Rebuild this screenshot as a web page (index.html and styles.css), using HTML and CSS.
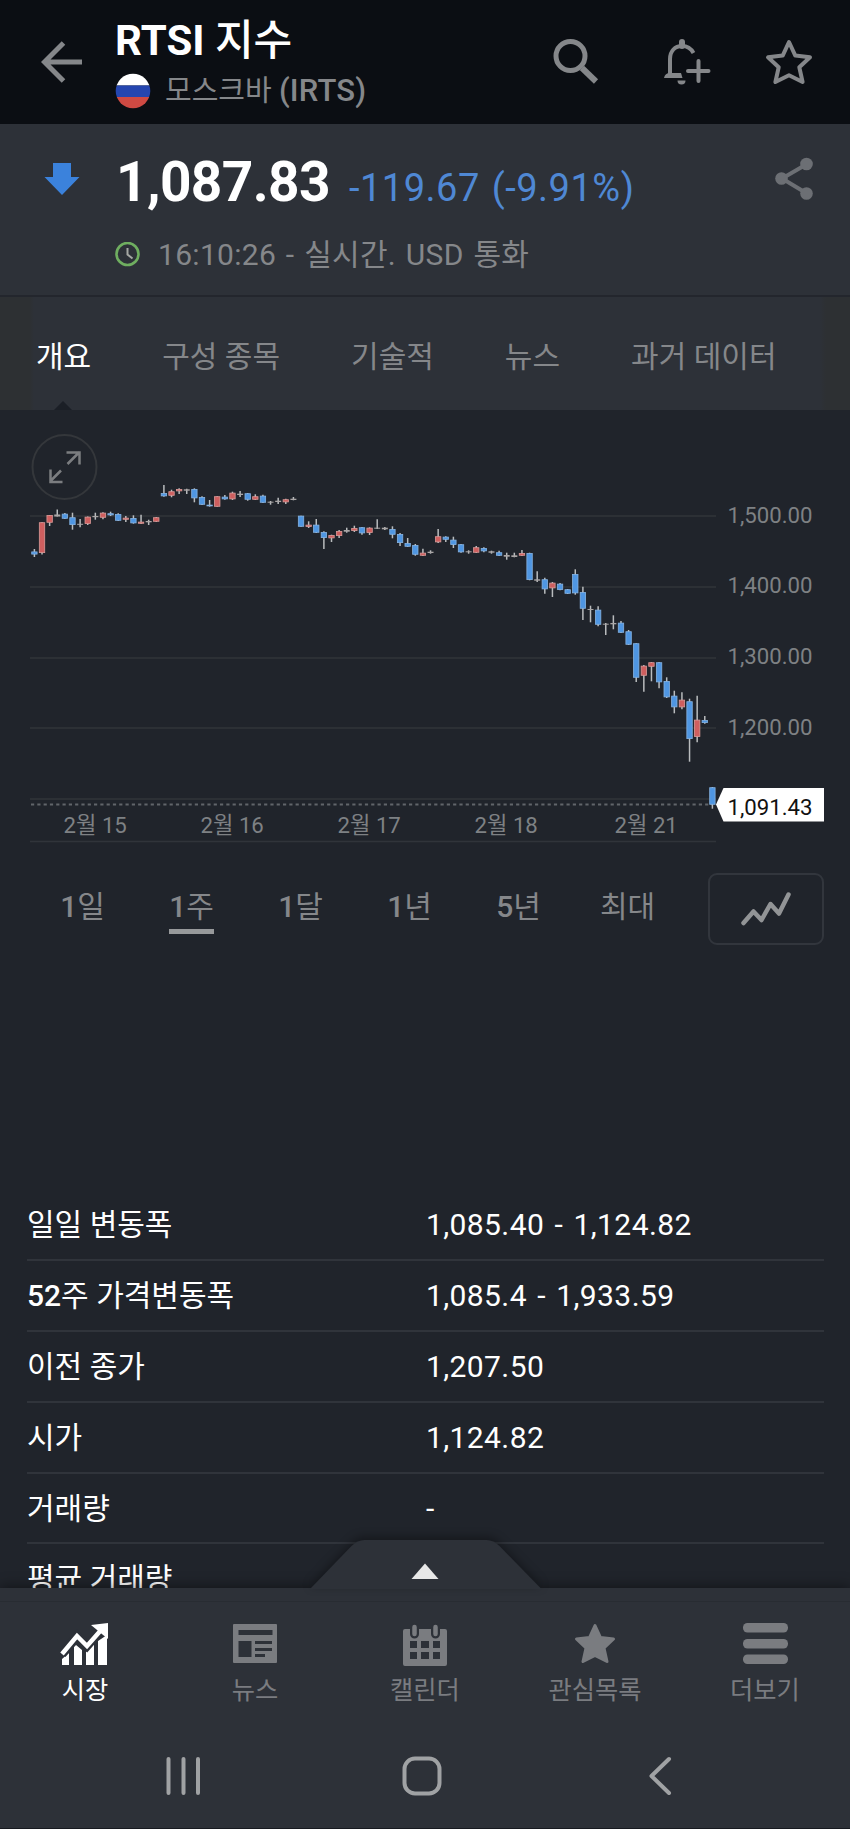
FILE: index.html
```
<!DOCTYPE html>
<html lang="ko">
<head>
    <meta charset="UTF-8">
    <meta name="viewport" content="width=device-width, initial-scale=1.0">
    <title>RTSI 지수</title>
    <link rel="stylesheet" href="styles.css">
</head>
<body>
    <header class="topbar">
        <svg class="back" width="42" height="42" viewBox="0 0 42 42"><path d="M41 21H3M22.500 2 3.500 21l19 19" /></svg>
        <div class="title">
            <h1>RTSI <span>지수</span></h1>
            <div class="exchange">
                <svg width="36" height="36" viewBox="0 0 36 36">
                    <clipPath id="flag"><circle cx="18" cy="18" r="17.3" /></clipPath>
                    <g clip-path="url(#flag)">
                        <rect width="36" height="12.5" fill="#fff" />
                        <rect y="12.5" width="36" height="11.5" fill="#2546b0" />
                        <rect y="24" width="36" height="12" fill="#cf4a43" />
                    </g>
                </svg>
                <span>모스크바 <b>(IRTS)</b></span>
            </div>
        </div>
        <div class="actions">
            <svg width="46" height="46" viewBox="0 0 46 46" fill="none" stroke="#85878a">
                <circle cx="17.5" cy="17" r="14.5" stroke-width="5" />
                <path d="M29 29 43 42.500" stroke-width="6" />
            </svg>
            <svg width="48" height="48" viewBox="0 0 48 48" fill="none" stroke="#85878a" stroke-width="4">
                <path d="M7 38V21c0-8 5-13 12-13 5 0 9 2.500 11.500 7" />
                <path d="M1 40q1-5 6-5h11l1.500 5z" fill="#85878a" stroke="none" />
                <path d="M19 8V4" stroke-width="6" stroke-linecap="round" />
                <path d="M35.500 23v20M25 33h20.500" stroke-linecap="round" />
                <path d="M14.500 42.500h8a4 4 0 0 1-8 0z" fill="#85878a" stroke="none" />
            </svg>
            <svg width="48" height="48" viewBox="0 0 48 48" fill="none" stroke="#85878a" stroke-width="4" stroke-linejoin="round">
                <path d="M24 4l6.300 13.600L45 19.300 34.300 29.200 37.600 44 24 37.300 10.400 44l3.300-14.800L3 19.300l14.700-1.700z" />
            </svg>
        </div>
    </header>

    <section class="quote">
        <svg class="down" width="36" height="34" viewBox="0 0 36 34"><path d="M9 1h18v14h8.500L18 33 .500 15H9z" fill="#3b82dc" /></svg>
        <div class="quote-info">
            <div class="price-line">
                <span class="price">1,087.83</span>
                <span class="change">-119.67 (-9.91%)</span>
            </div>
            <div class="time-line">
                <svg width="26" height="26" viewBox="0 0 26 26" fill="none">
                    <circle cx="12.500" cy="12" r="11" stroke="#6fae60" stroke-width="2.600" />
                    <path d="M12.500 6v6.500l5 4" stroke="#a5a8a4" stroke-width="2" />
                </svg>
                <span>16:10:26 - 실시간. USD 통화</span>
            </div>
        </div>
        <svg class="share" width="40" height="44" viewBox="0 0 40 44" fill="#6c6f74">
            <path d="M33 7 8 21.500 33 36.500" fill="none" stroke="#6c6f74" stroke-width="4" />
            <circle cx="32.500" cy="7" r="6.300" /><circle cx="7.500" cy="21.500" r="6.300" /><circle cx="32.500" cy="36.500" r="6.300" />
        </svg>
    </section>

    <nav class="tabs">
        <a class="active">개요</a>
        <a>구성 종목</a>
        <a>기술적</a>
        <a>뉴스</a>
        <a>과거 데이터</a>
    </nav>

    <main>
        <svg id="chart" width="850" height="440" viewBox="0 410 850 440">
            <g class="grid">
                <path d="M30 516H716M30 587H716M30 658H716M30 728H716M30 799H716M30 841.500H716" />
            </g>
            <path class="last-line" d="M31 804.500H712" />
            <g id="candles"></g>
            <g class="expand">
                <circle cx="64.500" cy="467" r="32" />
                <path d="M67.500 464 79.500 452M66.500 452.500h13v12M61 470.500 50 481.500M50.500 469.500v12.500h12" />
            </g>
            <g class="axis">
                <text x="727.500" y="523">1,500.00</text>
                <text x="727.500" y="593">1,400.00</text>
                <text x="727.500" y="664">1,300.00</text>
                <text x="727.500" y="735">1,200.00</text>
                <text x="63.500" y="833">2월 15</text>
                <text x="200.500" y="833">2월 16</text>
                <text x="337.500" y="833">2월 17</text>
                <text x="474.500" y="833">2월 18</text>
                <text x="614.500" y="833">2월 21</text>
            </g>
            <path d="M716 804.500 723.500 788H824v33.500H723.500z" fill="#fff" />
            <text class="last-price" x="727.500" y="814.500">1,091.43</text>
        </svg>

        <div class="periods">
            <div class="period-list">
                <span><b>1</b>일</span>
                <span class="selected"><b>1</b>주</span>
                <span><b>1</b>달</span>
                <span><b>1</b>년</span>
                <span><b>5</b>년</span>
                <span>최대</span>
            </div>
            <button class="chart-type" type="button">
                <svg width="50" height="34" viewBox="0 0 50 34"><path d="M2.500 31 12.500 19.500 20.500 28 29.500 12 38 21.500 47.500 2.500" /></svg>
            </button>
        </div>

        <div class="stats">
            <div class="row"><label>일일 변동폭</label><span>1,085.40 - 1,124.82</span></div>
            <div class="row"><label><b>52</b>주 가격변동폭</label><span>1,085.4 - 1,933.59</span></div>
            <div class="row"><label>이전 종가</label><span>1,207.50</span></div>
            <div class="row"><label>시가</label><span>1,124.82</span></div>
            <div class="row"><label>거래량</label><span>-</span></div>
            <div class="row"><label>평균 거래량</label><span></span></div>
        </div>
    </main>

    <footer>
        <svg class="handle" width="232" height="49" viewBox="0 0 232 49">
            <path d="M0 49 41.500 6q6-6 13-6h122q7 0 13 6l42 43z" fill="#2d3138" />
            <path d="M101.500 39 115 23.500l13.500 15.500z" fill="#e8e8e8" />
        </svg>
        <div class="menu">
            <a class="active">
                <svg width="50" height="44" viewBox="0 0 50 44" fill="currentColor">
                    <path d="M2 43v-6l7-6v12zM14 43V25l2-2 6 5v15zM26 43V30l8-9v22zM38 43V19l9-6v30z" />
                    <path d="M2 32 17 14l10 10L42 7" fill="none" stroke="#2d3138" stroke-width="9" />
                    <path d="M2 32 17 14l10 10L42 7" fill="none" stroke="currentColor" stroke-width="4.500" />
                    <path d="M31 3 48 1v16z" />
                </svg>
                <span>시장</span>
            </a>
            <a>
                <svg width="50" height="44" viewBox="0 0 50 44" fill="currentColor">
                    <path fill-rule="evenodd" d="M4 2h42q1 0 1 1v37q0 1-1 1H4q-1 0-1-1V3q0-1 1-1zM8.500 8v5h34V8zM8.500 19v16h13V19zM25 19v3h17v-3zM25 26v3h17v-3zM25 32v3h10v-3z" />
                </svg>
                <span>뉴스</span>
            </a>
            <a>
                <svg width="50" height="44" viewBox="0 0 50 44" fill="currentColor">
                    <path fill-rule="evenodd" d="M3 9q0-2 2-2h40q2 0 2 2v33q0 2-2 2H5q-2 0-2-2zM10 19v7h7v-7zM21 19v7h8v-7zM33 19v7h7v-7zM10 30v7h7v-7zM21 30v7h8v-7zM33 30v7h7v-7z" />
                    <path d="M14.500 6v6M35.500 6v6" stroke="#2d3138" stroke-width="9" stroke-linecap="round" />
                    <path d="M14.500 5v7M35.500 5v7" stroke="currentColor" stroke-width="4.500" stroke-linecap="round" />
                </svg>
                <span>캘린더</span>
            </a>
            <a>
                <svg width="50" height="44" viewBox="0 0 50 44" fill="currentColor">
                    <path d="M25 3.500 30.500 15.500 43.500 17 34 26 37 39.500 25 33.500 13 39.500 16 26 6.500 17 19.500 15.500z" stroke="currentColor" stroke-width="3" stroke-linejoin="round" />
                </svg>
                <span>관심목록</span>
            </a>
            <a>
                <svg width="50" height="44" viewBox="0 0 50 44" fill="currentColor">
                    <rect x="3" y="1" width="45" height="9.500" rx="4.500" />
                    <rect x="3" y="17" width="45" height="9.500" rx="4.500" />
                    <rect x="3" y="32.500" width="45" height="9.500" rx="4.500" />
                </svg>
                <span>더보기</span>
            </a>
        </div>
        <div class="system-nav">
            <svg width="40" height="40" viewBox="0 0 40 40"><path d="M4.500 3v34M19.500 3v34M34 3v34" /></svg>
            <svg width="40" height="40" viewBox="0 0 40 40"><rect x="2.500" y="2.500" width="35" height="35" rx="10.500" /></svg>
            <svg width="40" height="40" viewBox="0 0 40 40"><path d="M29 3 11.500 20 29 37" /></svg>
        </div>
    </footer>
    <script src="chart.js"></script>
</body>
</html>
```
FILE: styles.css
```
* {
    box-sizing: border-box;
}
body {
    margin: 0;
    width: 850px;
    height: 1829px;
    display: flex;
    flex-direction: column;
    overflow: hidden;
    background-color: #20242b;
    color: #fff;
    font-family: Roboto, "Noto Sans CJK KR", sans-serif;
}
b {
    font-weight: 500;
}
svg {
    display: block;
    flex-shrink: 0;
}
.topbar {
    height: 124px;
    flex-shrink: 0;
    display: flex;
    padding: 0 37px 0 41px;
    background-color: #0b0e13;
}
.back {
    margin-top: 41px;
    fill: none;
    stroke: #85878a;
    stroke-width: 5;
}
.title {
    margin-left: 32px;
    padding-top: 15px;
}
h1 {
    margin: 0;
    height: 56px;
    line-height: 51px;
    font-size: 42px;
    font-weight: 700;
}
h1 span {
    font-weight: 500;
}
.exchange {
    display: flex;
    align-items: center;
    height: 40px;
    font-size: 29px;
    color: #85878a;
}
.exchange span {
    margin-left: 14px;
    line-height: 36px;
}
.exchange b {
    font-size: 31px;
    letter-spacing: 0.2px;
}
.actions {
    display: flex;
    margin-left: auto;
    padding-top: 38px;
    gap: 54px;
}
.actions svg:first-child {
    margin: 1px 10px 0 0;
}
.quote {
    height: 173px;
    flex-shrink: 0;
    display: flex;
    padding: 0 36px 0 44px;
    background-color: #2d3138;
    border-bottom: 2px solid #23262d;
}
.down {
    margin-top: 38px;
}
.quote-info {
    margin-left: 35px;
}
.price-line {
    display: flex;
    align-items: baseline;
    height: 106px;
    padding-top: 25px;
    line-height: 66px;
}
.price {
    width: 234px;
    padding-left: 1px;
    font-size: 55px;
    font-weight: 700;
    letter-spacing: -0.600px;
}
.change {
    font-size: 38px;
    letter-spacing: 0.500px;
    word-spacing: 2px;
    color: #4f88d4;
}
.time-line {
    display: flex;
    align-items: center;
    font-size: 30px;
    line-height: 50px;
    letter-spacing: 0.300px;
    word-spacing: 2px;
    color: #85878a;
}
.time-line span {
    margin-left: 17px;
}
.share {
    margin: 33px 0 0 auto;
}
.tabs {
    height: 113px;
    flex-shrink: 0;
    display: flex;
    gap: 71px;
    padding: 0 36px;
    line-height: 120px;
    font-size: 30px;
    color: #85878a;
    background: linear-gradient(90deg, #2d3033 30px, #2d3138 34px, #2d3138 820px, #2d3033 826px);
}
.tabs .active {
    position: relative;
    color: #fff;
}
.tabs .active::after {
    content: "";
    position: absolute;
    left: 18px;
    bottom: 0;
    border: 9px solid transparent;
    border-top: 0;
    border-bottom-color: #1b1f26;
}
main {
    height: 1178px;
    flex-shrink: 0;
    overflow: hidden;
}
.grid path {
    fill: none;
    stroke: #30343a;
    stroke-width: 1.500;
}
.last-line {
    stroke: #61656a;
    stroke-width: 2;
    stroke-dasharray: 3.200 3.100;
}
.expand {
    fill: none;
    stroke: #7b7d80;
    stroke-width: 2.500;
}
.expand circle {
    stroke: #34373b;
    stroke-width: 2;
}
.axis {
    fill: #7e8184;
    font-size: 22.200px;
}
.last-price {
    fill: #111;
    font-size: 22.200px;
}
.periods {
    display: flex;
    align-items: center;
    justify-content: space-between;
    height: 118px;
    padding: 0 26px 0 28px;
}
.period-list {
    display: grid;
    grid-template-columns: repeat(6, 109px);
    justify-items: center;
    padding-top: 1px;
    font-size: 30px;
    line-height: 44px;
    color: #85878a;
}
.period-list span {
    height: 49px;
}
.period-list .selected {
    border-bottom: 5px solid #97999b;
}
.chart-type {
    width: 116px;
    height: 72px;
    display: flex;
    align-items: center;
    justify-content: center;
    padding: 0;
    border: 2px solid #32363d;
    border-radius: 9px;
    background: none;
}
.chart-type path {
    fill: none;
    stroke: #929496;
    stroke-width: 4.500;
    stroke-linecap: round;
    stroke-linejoin: round;
}
.stats {
    margin: 222px 26px 0 27px;
}
.row {
    height: 70.900px;
    display: grid;
    grid-template-columns: 399px 1fr;
    border-bottom: 2px solid #30343b;
    font-size: 30px;
    line-height: 70px;
}
.row span {
    letter-spacing: 0.400px;
    word-spacing: 2.500px;
}
footer {
    position: relative;
    flex: 1;
    background-color: #2d3138;
    border-bottom: 1px solid #171a20;
    box-shadow: 0 -2px 12px rgba(0, 0, 0, 0.4);
}
.handle {
    position: absolute;
    left: 310px;
    top: -48px;
    filter: drop-shadow(0 -3px 5px rgba(0, 0, 0, 0.35));
}
.menu {
    display: grid;
    grid-template-columns: repeat(5, 1fr);
    height: 142px;
    margin-top: 13px;
    border-top: 1px solid #282c32;
    padding-top: 20px;
    font-size: 25.300px;
    color: #7a7c80;
}
.menu a {
    display: flex;
    flex-direction: column;
    align-items: center;
    line-height: 49px;
}
.menu .active {
    color: #fff;
}
.system-nav {
    display: flex;
    padding: 13px 0 0 164px;
    gap: 198px;
}
.system-nav svg {
    fill: none;
    stroke: #a0a2a4;
    stroke-width: 4;
    stroke-linecap: round;
    stroke-linejoin: round;
}
```
FILE: chart.js
```
// high, body top, body bottom, low, colour (b = down, r = up, n = flat)
const candles = [
    [549, 551.5, 554.5, 557, 'b'], [522.3, 522.3, 553, 554.5, 'r'], [515, 515, 522.7, 526, 'r'],
    [509.5, 514.5, 516.5, 516.5, 'n'], [513, 513.7, 518.7, 519, 'b'], [512.7, 517.3, 525, 529.7, 'b'],
    [519, 523.8, 524.8, 527.3, 'n'], [516.5, 516.7, 524, 525, 'r'], [512.7, 516, 517.2, 519.7, 'n'],
    [512.3, 512.7, 517.7, 519.3, 'r'], [511.7, 513.3, 515.3, 516, 'b'], [513.3, 514, 520.7, 521, 'b'],
    [516, 517.7, 519.7, 522, 'r'], [515.3, 518, 523.3, 523.7, 'b'], [514.7, 521.7, 523.7, 524, 'r'],
    [519.7, 521, 522.3, 525, 'n'], [517, 517.3, 521.7, 522, 'r'],
    [485, 493, 496.3, 496.7, 'b'], [489.7, 491.3, 495.7, 497.3, 'r'], [488.3, 489, 491.3, 494, 'r'],
    [488.7, 489.3, 490.7, 494, 'n'], [488.3, 489, 498.3, 502.3, 'b'], [496.3, 497, 504.7, 505, 'b'],
    [500, 504.7, 506.3, 506.7, 'b'], [496.3, 496.3, 506.7, 506.7, 'r'], [495, 496.7, 499.3, 499.7, 'b'],
    [491.7, 492.7, 499.3, 500, 'r'], [491, 493.7, 495, 497, 'n'], [493, 493.3, 499.7, 500.7, 'b'],
    [494.3, 496.3, 499.7, 500, 'r'], [494.7, 495.7, 502.7, 503, 'b'], [501, 501.7, 502.7, 504.7, 'n'],
    [497.7, 500.7, 502, 504, 'n'], [498.7, 499.3, 502.3, 504, 'r'], [497, 498.7, 500, 500.3, 'n'],
    [515.7, 515.7, 526.7, 526.7, 'b'], [521.3, 524.7, 527, 528, 'r'], [519, 524.7, 532.7, 533, 'b'],
    [531.3, 532, 538, 549, 'b'], [534.7, 535, 538.3, 542, 'r'], [530, 531, 536, 538, 'r'],
    [527.7, 530, 531.7, 532.7, 'n'], [525.7, 528, 531, 532, 'r'], [527, 527.3, 533.3, 534.7, 'b'],
    [527.3, 527.7, 533, 535, 'r'], [519.3, 527.7, 528.7, 529, 'n'], [527, 527.7, 529.3, 530, 'n'],
    [526.3, 529, 534.7, 538.3, 'b'], [533, 534, 543, 546, 'b'], [538, 543, 546.7, 547, 'b'],
    [544, 545, 554.7, 555.7, 'b'], [548.7, 552.7, 555.7, 556, 'r'], [550.3, 551.7, 553, 553.7, 'n'],
    [529, 536.3, 542.3, 543, 'r'], [536.3, 536.7, 539.7, 542, 'b'], [536.7, 539.7, 545, 548, 'b'],
    [544, 544.3, 552.3, 552.7, 'b'], [550.3, 551.3, 552.3, 553.7, 'n'], [546, 547.3, 552.7, 553, 'r'],
    [547.3, 548, 551.3, 552.3, 'b'], [550.7, 551.3, 552.7, 553.7, 'n'], [550.7, 552.3, 555.7, 556, 'b'],
    [552.7, 555, 556.7, 559.7, 'n'], [552.7, 555.3, 557, 557.3, 'n'], [550, 553, 555.7, 556, 'r'],
    [552.7, 553, 580, 580.3, 'b'], [571.3, 579.3, 580.7, 582, 'n'], [577.7, 579.3, 589.3, 593.7, 'b'],
    [582, 582.7, 588.3, 597, 'r'], [583, 583.7, 590, 590.3, 'b'], [589, 589.3, 593.7, 594, 'b'],
    [569.3, 574, 593.3, 594.7, 'b'], [586.7, 592, 608.7, 620, 'b'], [605.7, 609, 610, 622.3, 'n'],
    [606.3, 609.7, 624.7, 626.3, 'b'], [623, 623.7, 624.7, 635, 'n'], [615.3, 623, 624.3, 629.3, 'n'],
    [621, 622.7, 632.7, 633, 'b'], [630, 631.3, 644.7, 645, 'b'], [643.3, 643.3, 677.7, 682, 'b'],
    [665, 665.7, 675.7, 691.7, 'r'], [662, 662.3, 666.7, 681.3, 'r'], [662, 662.3, 682.3, 688.3, 'b'],
    [677.3, 681, 697.3, 698, 'b'], [690.7, 695.7, 707.3, 713.3, 'b'], [692.3, 699.7, 707.3, 709.3, 'r'],
    [698.7, 701.3, 739, 761.7, 'b'], [695.7, 719.7, 737, 742.3, 'r'], [716, 720, 723, 723.7, 'b'],
    [787, 787.3, 804.7, 808.7, 'b']
];
const fills = { b: '#4f96e2', r: '#cf5f5f', n: '#aaa6a6' };
const edges = { b: '#86b3e2', r: '#d99a98', n: '#aaa6a6' };

let out = '';
candles.forEach(function (c, i) {
    const x = 34.4 + i * 7.618;
    out += `<path d="M${x} ${c[0]}V${c[3]}" stroke="#b9bcbe" stroke-width="1.5"/>`;
    if (c[4] === 'n') {
        out += `<rect x="${x - 3}" y="${c[1]}" width="6" height="${c[2] - c[1]}" fill="${fills.n}"/>`;
    } else {
        out += `<rect x="${x - 2.7}" y="${c[1] + 0.4}" width="5.4" height="${c[2] - c[1] - 0.8}" fill="${fills[c[4]]}" stroke="${edges[c[4]]}" stroke-width="0.8"/>`;
    }
});
document.getElementById('candles').innerHTML = out;
```
